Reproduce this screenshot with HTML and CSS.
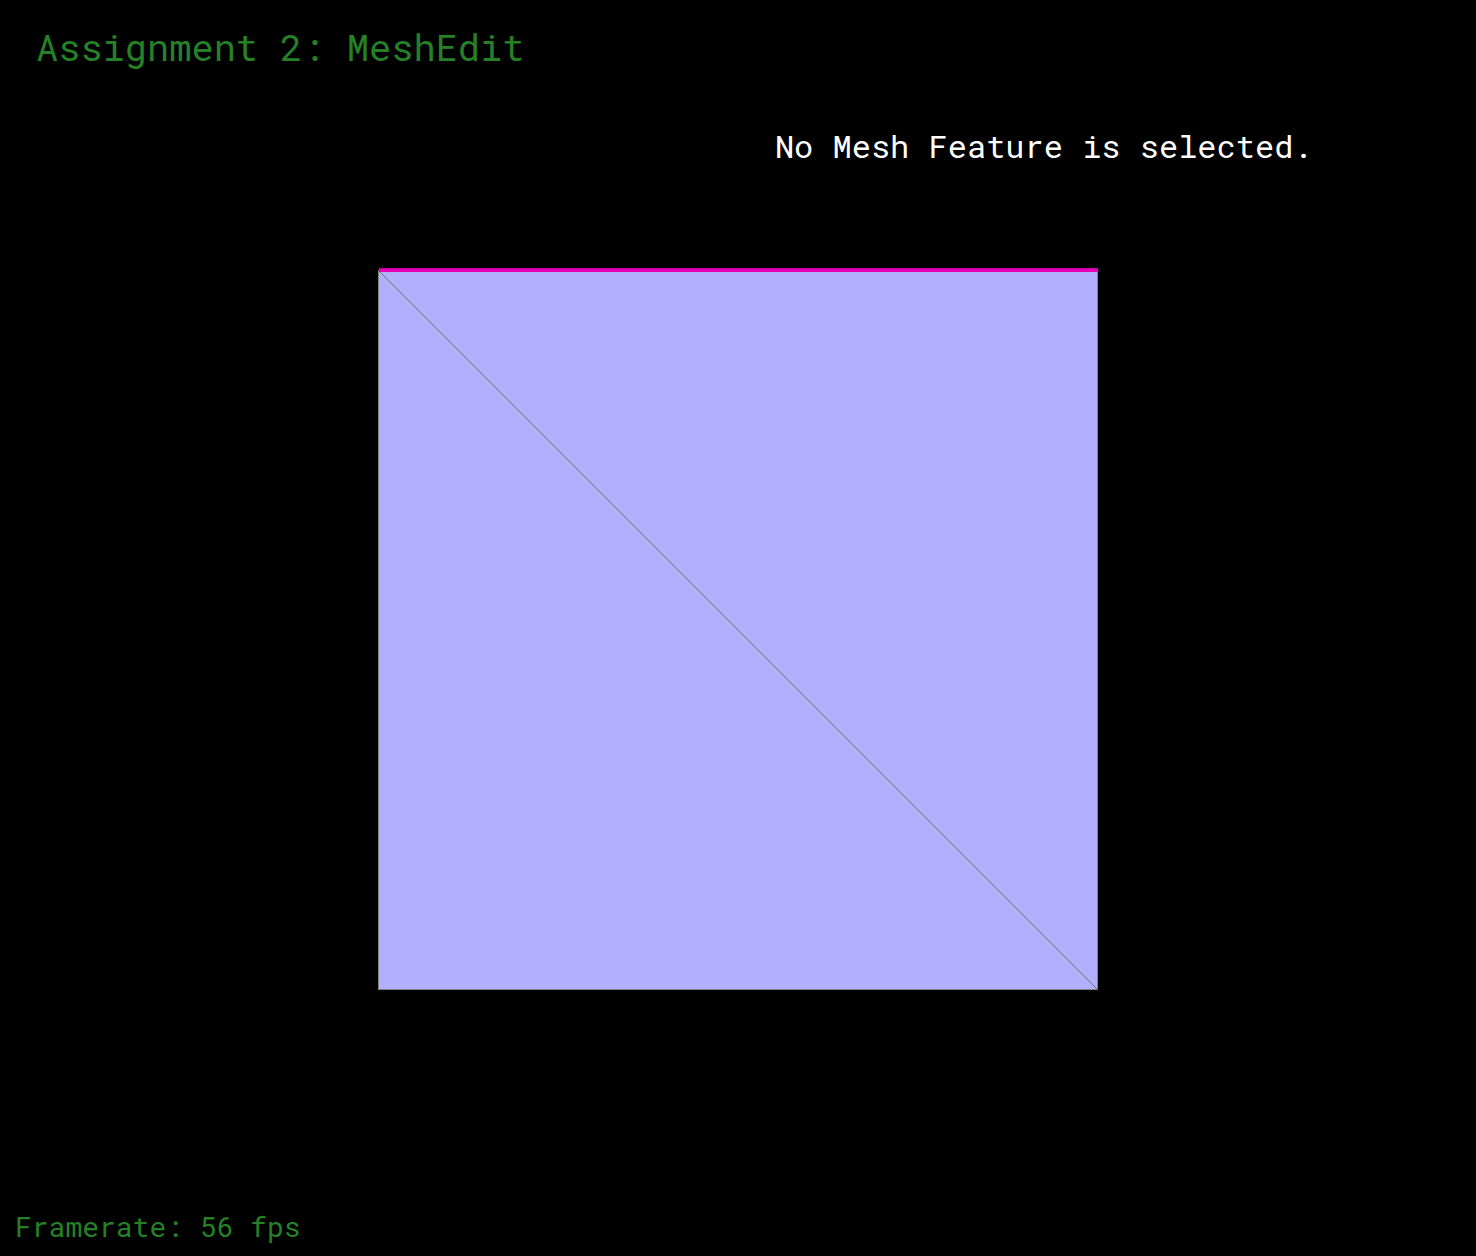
FILE: index.html
```html
<!DOCTYPE html>
<html lang="en">
<head>
<meta charset="utf-8">
<meta name="viewport" content="width=device-width, initial-scale=1">
<title>MeshEdit</title>
<link rel="stylesheet" href="styles.css">
</head>
<body class="app">
<header class="header">
<h1 class="title">Assignment 2: MeshEdit</h1>
</header>
<p class="selection">No Mesh Feature is selected.</p>
<main class="viewport">
<svg class="mesh" viewBox="0 0 720 722" role="img" aria-label="Square mesh made of two triangles">
<rect class="face" x="0" y="2" width="720" height="720"/>
<path class="edge" d="M.5 2V721.5H719.5V2"/>
<path class="edge diagonal" d="M0 2L720 722"/>
<rect class="highlight" x="1" y="0" width="719" height="4"/>
<rect class="highlight-rim" x="1" y="0" width="719" height="1"/>
</svg>
</main>
<footer class="footer">Framerate: 56 fps</footer>
</body>
</html>
```
FILE: styles.css
```css
* {
  box-sizing: border-box;
}

.app {
  display: flex;
  flex-direction: column;
  min-height: 100vh;
  margin: 0;
  background: #000;
  color: #268026;
  font-family: "Roboto Mono", "Liberation Mono", monospace;
}

.header {
  padding: 23px 36px 0;
}

.title {
  margin: 0;
  font-size: 37px;
  font-weight: 400;
  line-height: 48px;
}

.selection {
  margin: 55px 0 0;
  padding-left: 52.5%;
  color: #fff;
  font-size: 32px;
  line-height: 40px;
}

.viewport {
  display: flex;
  justify-content: center;
  padding-top: 102px;
}

.mesh {
  display: block;
  width: 100%;
  max-width: 720px;
}

.face {
  fill: #b0b0ff;
}

.edge {
  fill: none;
  stroke: #808080;
  stroke-width: 1;
}

.diagonal {
  stroke: #707860;
}

.highlight {
  fill: #e600b8;
}

.highlight-rim {
  fill: #c000a0;
}

.footer {
  margin-top: auto;
  padding: 0 15px 9px;
  font-size: 28px;
  line-height: 40px;
}
```
